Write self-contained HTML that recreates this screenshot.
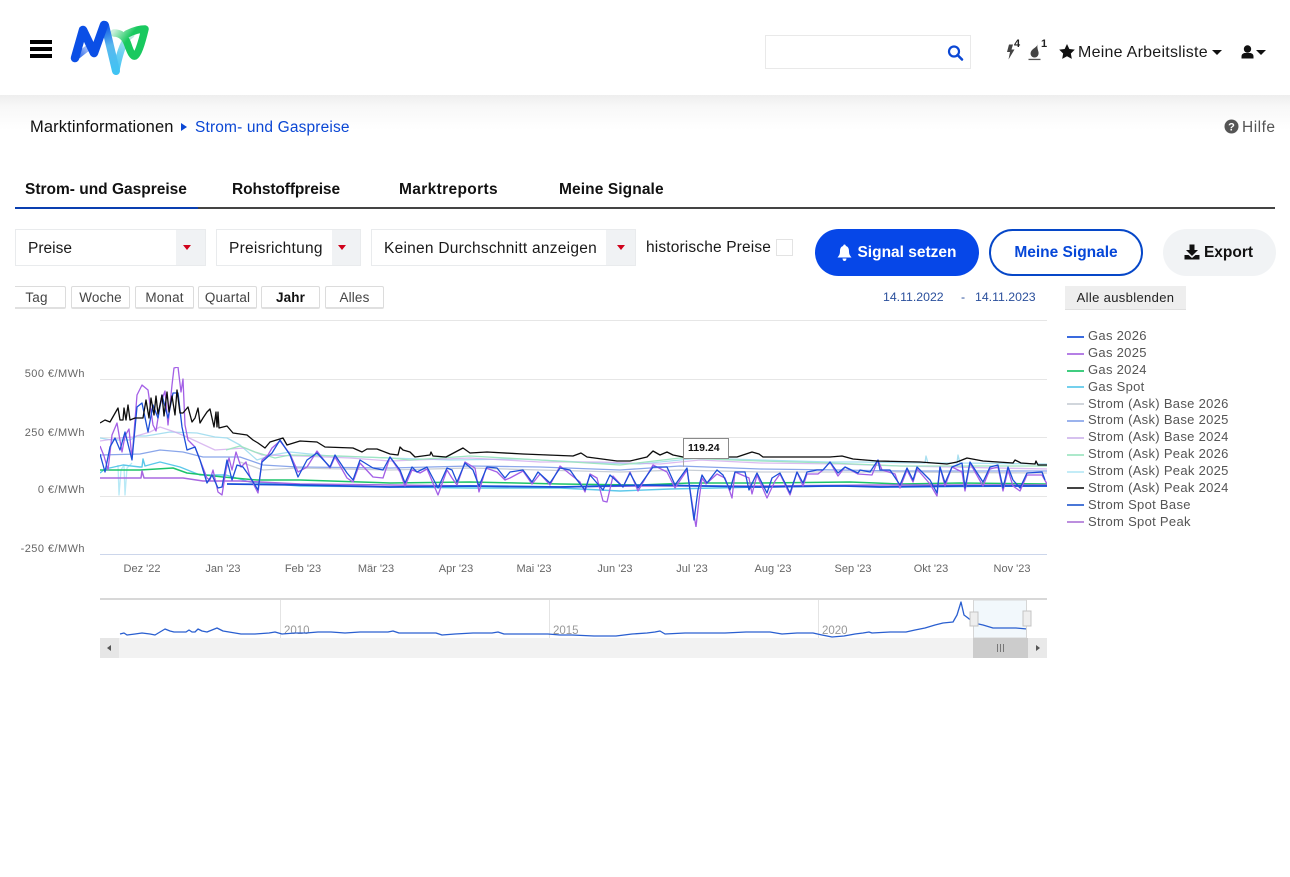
<!DOCTYPE html>
<html lang="de"><head><meta charset="utf-8"><title>Strom- und Gaspreise</title>
<style>
html,body{margin:0;padding:0;background:#fff}
body{width:1290px;height:877px;position:relative;overflow:hidden;font-family:"Liberation Sans",sans-serif;color:#111}
.a{position:absolute;white-space:nowrap}
.sel{position:absolute;top:229px;height:35px;border:1px solid #e9ebed;background:#fff;box-sizing:content-box}
.sel span{position:absolute;left:12px;top:10px;font-size:15.5px;color:#1a1a1a;white-space:nowrap;letter-spacing:.25px}
.sel i{position:absolute;right:0;top:0;bottom:0;width:29px;background:#f0f2f4}
.sel i:after{content:"";position:absolute;left:11px;top:15px;border:4px solid transparent;border-top:5px solid #d0021b;border-bottom:0}
.s1 i:after{left:7px}
.s2 i:after{left:6px}
.rb{position:absolute;top:286px;height:20px;border:1px solid #dcdcdc;border-bottom:2px solid #e0e0e0;border-radius:2px;background:#fff;text-align:center;font-size:13.5px;line-height:21px;color:#444;box-sizing:content-box;letter-spacing:.15px}
.tab{position:absolute;top:181px;font-size:15.5px;font-weight:bold;color:#111;white-space:nowrap}
.btn{position:absolute;top:229px;height:47px;border-radius:24px;box-sizing:border-box;font-weight:bold;font-size:15.5px;line-height:47px;text-align:center;white-space:nowrap}
.leg{position:absolute;left:1088px;font-size:13px;color:#555;white-space:nowrap;line-height:16px;letter-spacing:.3px}
.ln{position:absolute;left:1067px;width:17px;height:2px;margin-top:-.5px;opacity:.85}
.yl{position:absolute;left:0;width:85px;text-align:right;font-size:11px;color:#666;letter-spacing:.45px}
.xl{position:absolute;top:563px;width:60px;text-align:center;font-size:11px;color:#666}
</style></head><body>

<!-- header -->
<div class="a" style="left:0;top:95px;width:1290px;height:35px;background:linear-gradient(#eeeeee,#f8f8f8 35%,#fff)"></div>
<div class="a" style="left:30px;top:40px;width:22px;height:4px;background:#000"></div>
<div class="a" style="left:30px;top:47px;width:22px;height:4px;background:#000"></div>
<div class="a" style="left:30px;top:54px;width:22px;height:4px;background:#000"></div>

<svg class="a" style="left:60px;top:10px" width="100" height="70" viewBox="60 10 100 70">
<defs>
<linearGradient id="g1" gradientUnits="userSpaceOnUse" x1="104" y1="24" x2="116" y2="72"><stop offset="0" stop-color="#0b4fe6"/><stop offset=".45" stop-color="#5ab8ee"/><stop offset="1" stop-color="#3fc3f3"/></linearGradient>
<linearGradient id="g2" gradientUnits="userSpaceOnUse" x1="75" y1="58" x2="90" y2="46"><stop offset="0" stop-color="#0b4fe6"/><stop offset="1" stop-color="#c5d6fa"/></linearGradient>
<linearGradient id="g3" gradientUnits="userSpaceOnUse" x1="132" y1="36" x2="116" y2="72"><stop offset="0" stop-color="#bdeedd"/><stop offset=".5" stop-color="#6fd0f2"/><stop offset="1" stop-color="#3fc3f3"/></linearGradient>
<linearGradient id="g4" gradientUnits="userSpaceOnUse" x1="113" y1="32" x2="126" y2="42"><stop offset="0" stop-color="#c9f0da"/><stop offset="1" stop-color="#19c95f"/></linearGradient>
</defs>
<path d="M75 58 L89 47" fill="none" stroke="url(#g2)" stroke-width="6" stroke-linecap="round"/>
<path d="M131 35 Q122 40 116 71" fill="none" stroke="url(#g3)" stroke-width="7" stroke-linecap="round"/>
<path d="M114 33 Q124 33 128 45 Q132 57 135 56 Q139 54 145 29 Q137 29 127 34" fill="none" stroke="url(#g4)" stroke-width="7.500" stroke-linecap="round" stroke-linejoin="round"/>
<path d="M105 25 L116 71" fill="none" stroke="url(#g1)" stroke-width="8" stroke-linecap="round"/>
<path d="M75 58 L83 30 L94 53 L104 25" fill="none" stroke="#0b4fe6" stroke-width="8.500" stroke-linecap="round" stroke-linejoin="round"/>
</svg>

<!-- search -->
<div class="a" style="left:765px;top:35px;width:204px;height:32px;border:1px solid #e9e9e9"></div>
<svg class="a" style="left:946px;top:44px" width="18" height="18" viewBox="0 0 18 18"><circle cx="8" cy="7.500" r="5" fill="none" stroke="#0b47d4" stroke-width="2.200"/><path d="M11.500 11l4.500 4.500" stroke="#0b47d4" stroke-width="2.600" stroke-linecap="round"/></svg>

<!-- status icons -->
<svg class="a" style="left:1004px;top:42px" width="14" height="20" viewBox="0 0 14 20"><path d="M5 2.500H9L7.500 7.500H10.500L4.500 17.500L6 10H3z" fill="#444"/></svg>
<div class="a" style="left:1014px;top:38px;font-size:11px;font-weight:bold;color:#222">4</div>
<svg class="a" style="left:1027px;top:42px" width="15" height="20" viewBox="0 0 15 20"><path d="M10.500 2C10.500 5 6 6 4 9.500C2.700 12.500 4.500 15.500 7.500 15.500C10.500 15.500 12 13 11.500 10C11 8 10 6 10.500 2z" fill="#444"/><rect x="1.500" y="16.800" width="12" height="1.300" fill="#555"/></svg>
<div class="a" style="left:1041px;top:38px;font-size:11px;font-weight:bold;color:#222">1</div>
<svg class="a" style="left:1059px;top:44px" width="16" height="15" viewBox="0 0 24 23"><path d="M12 0l3.600 7.600 8.400 1.100-6.100 5.800 1.500 8.300L12 18.800l-7.400 4 1.500-8.300L0 8.700l8.400-1.100z" fill="#111"/></svg>
<div class="a" style="left:1078px;top:44px;font-size:16px;color:#1a1a1a;letter-spacing:.25px">Meine Arbeitsliste</div>
<div class="a" style="left:1212px;top:50px;border:5px solid transparent;border-top:5px solid #111;border-bottom:0"></div>
<svg class="a" style="left:1241px;top:45px" width="14" height="15" viewBox="0 0 14 15"><circle cx="6.500" cy="4" r="3.700" fill="#111"/><path d="M0.500 13.500V11.500C0.500 9 2.500 8 4 8H9C10.500 8 12.500 9 12.500 11.500V13.500z" fill="#111"/></svg>
<div class="a" style="left:1256px;top:50px;border:5px solid transparent;border-top:5px solid #111;border-bottom:0"></div>

<!-- breadcrumb -->
<div class="a" style="left:30px;top:118px;font-size:16.500px;color:#111;letter-spacing:.13px">Marktinformationen</div>
<div class="a" style="left:181px;top:123px;border:4px solid transparent;border-left:6px solid #0b47d4;border-right:0"></div>
<div class="a" style="left:195px;top:119px;font-size:15.500px;color:#0b47d4;letter-spacing:.15px">Strom- und Gaspreise</div>
<svg class="a" style="left:1224px;top:119px" width="15" height="15" viewBox="0 0 15 15"><circle cx="7.500" cy="7.500" r="7" fill="#555"/><text x="7.500" y="11.500" font-size="11" font-weight="bold" text-anchor="middle" fill="#fff" font-family="Liberation Sans, sans-serif">?</text></svg>
<div class="a" style="left:1242px;top:119px;font-size:15.500px;color:#555;letter-spacing:.5px">Hilfe</div>

<!-- tabs -->
<div class="tab" style="left:25px">Strom- und Gaspreise</div>
<div class="tab" style="left:232px;letter-spacing:-.1px">Rohstoffpreise</div>
<div class="tab" style="left:399px;letter-spacing:.35px">Marktreports</div>
<div class="tab" style="left:559px;letter-spacing:.1px">Meine Signale</div>
<div class="a" style="left:15px;top:207px;width:1260px;height:2px;background:#444"></div>
<div class="a" style="left:15px;top:207px;width:183px;height:2px;background:#0a3fb0"></div>

<!-- selects -->
<div class="sel s1" style="left:15px;width:189px"><span style="letter-spacing:0">Preise</span><i></i></div>
<div class="sel s2" style="left:216px;width:143px"><span>Preisrichtung</span><i style="width:28px"></i></div>
<div class="sel" style="left:371px;width:263px"><span>Keinen Durchschnitt anzeigen</span><i></i></div>
<div class="a" style="left:646px;top:239px;font-size:15.500px;color:#1a1a1a;letter-spacing:.15px">historische Preise</div>
<div class="a" style="left:776px;top:239px;width:15px;height:15px;border:1px solid #e3e3e3"></div>

<!-- buttons -->
<div class="btn" style="left:815px;width:164px;background:#0647e8;color:#fff;padding-left:20px">Signal setzen</div>
<svg class="a" style="left:836px;top:244px" width="17" height="18" viewBox="0 0 17 18"><path d="M8.500 0.500C9.500 0.500 9.800 1.200 9.800 2C12 2.600 13 4.500 13 7C13 10.500 14 11.500 15.500 13.500H1.500C3 11.500 4 10.500 4 7C4 4.500 5 2.600 7.200 2C7.200 1.200 7.500 0.500 8.500 0.500z M6.500 14.500H10.500C10.500 16 9.500 17 8.500 17C7.500 17 6.500 16 6.500 14.500z" fill="#fff"/></svg>
<div class="btn" style="left:989px;width:154px;background:#fff;border:2px solid #0647c8;color:#0647d8;line-height:43px">Meine Signale</div>
<div class="btn" style="left:1163px;width:113px;background:#f1f3f5;color:#111;padding-left:18px">Export</div>
<svg class="a" style="left:1184px;top:244px" width="16" height="16" viewBox="0 0 16 16"><path d="M5.500 0.500H10.500V6H14L8 12L2 6H5.500z" fill="#111"/><path d="M0.500 11H4.500L8 14L11.500 11H15.500V15.500H0.500z" fill="#111"/></svg>

<!-- range buttons -->
<div class="rb" style="left:15px;border-left:0;border-radius:0 2px 2px 0;padding-right:7px;box-sizing:border-box;width:51px;height:23px">Tag</div>
<div class="rb" style="left:71px;width:57px">Woche</div>
<div class="rb" style="left:135px;width:57px">Monat</div>
<div class="rb" style="left:198px;width:57px">Quartal</div>
<div class="rb" style="left:261px;width:57px;font-weight:bold;color:#111">Jahr</div>
<div class="rb" style="left:325px;width:57px">Alles</div>
<div class="a" style="left:883px;top:290px;font-size:12.300px;color:#2a4f9c">14.11.2022</div>
<div class="a" style="left:961px;top:290px;font-size:12.300px;color:#2a4f9c">-</div>
<div class="a" style="left:975px;top:290px;font-size:12.300px;color:#2a4f9c">14.11.2023</div>
<div class="a" style="left:1065px;top:286px;width:121px;height:24px;background:#eeeeee;border-bottom:1px solid #e0e0e0;box-sizing:border-box;text-align:center;font-size:13px;line-height:23px;color:#222;letter-spacing:.35px">Alle ausblenden</div>

<!-- chart -->
<svg class="a" style="left:0;top:0" width="1290" height="877" viewBox="0 0 1290 877" fill="none" stroke-linejoin="round">
<defs><filter id="sf" x="0" y="0" width="1" height="1" filterUnits="objectBoundingBox"><feGaussianBlur stdDeviation="0.35"/></filter></defs>
<g stroke="#e6e6e6" stroke-width="1">
<path d="M100 320.500H1047M100 379.500H1047M100 437.500H1047M100 496.500H1047"/>
</g>
<path d="M100 554.500H1047" stroke="#ccd6eb"/>
<g filter="url(#sf)">
<!-- light series -->
<polyline stroke="#b8e9f6" stroke-width="1.300" points="118,465 119,495 121,470 124,465 125,495 127,468 132,463"/>
<polyline stroke="#a8dff0" stroke-width="1.300" points="100,438 112,440 130,440 137,436 146,436 170,432 197,433 215,437 227,438 240,445 257,460 272,455 290,452 330,456 390,458 450,460 520,459 600,463 640,464 700,458 760,460 830,462 860,462 925,463 926,456 928,463 957,463 958,455 960,463 1047,464"/>
<polyline stroke="#cfa6ec" stroke-opacity=".75" stroke-width="1.300" points="100,441 120,438 133,437 150,432 160,427 175,432 187,437 215,450 245,448 262,455 300,456 350,458 390,461 470,458 540,462 600,462 660,464 700,460 760,463 840,464 900,466 1047,469"/>
<polyline stroke="#9fe5c2" stroke-width="1.300" points="226,450 240,446 255,452 275,458 290,455 340,456 390,458 410,460 470,456 540,460 620,465 680,458 760,461 830,463 900,466 1047,466"/>
<polyline stroke="#8aa6ea" stroke-width="1.300" points="100,455 140,454 160,450 183,452 203,457 240,457 263,465 297,467 390,468 470,466 540,467 620,470 680,466 760,469 840,470 900,471 1047,471"/>
<polyline stroke="#c9cfd6" stroke-width="1.300" points="240,462 263,470 297,468 390,470 470,468 540,470 620,472 680,470 760,472 840,472 900,472 1047,473"/>

<!-- gas -->
<polyline stroke="#5cc8ea" stroke-width="1.400" points="100,473 105,469 123,465 140,467 142,467 143,459 145,466 160,462 180,467 200,475 226,475 250,482 300,486 400,487 470,488 560,488 620,491 670,489 760,487 850,486 900,487 1047,486"/>
<polyline stroke="#1fc46a" stroke-width="1.500" points="100,470 140,470 173,468 187,473 223,477 257,480 300,480 390,483 470,482 560,484 640,485 690,483 760,483 850,482 900,484 960,483 1047,484"/>
<polyline stroke="#a868e0" stroke-width="1.500" points="100,478 140,478 141,478 142,471 144,478 183,478 203,481 240,481 300,484 390,485 470,486 560,487 640,486 760,486 880,485 1047,485"/>
<polyline stroke="#1750d8" stroke-width="1.800" points="227,484 300,485 390,487 470,486 560,487 650,485 760,487 826,486 845,486 880,487 960,486 1047,486"/>

<!-- spot peak -->
<polyline stroke="#a35fe6" stroke-width="1.300" points="100,446 104,456 108,470 112,435 117,423 122,452 125,436 129,429 132,458 137,395 142,385 148,390 153,425 156,431 160,405 165,391 168,425 172,385 174,368 178,367 181,392 183,379 185,425 188,440 195,447 200,460 207,478 210,480 213,470 218,492 222,495 226,470 229,458 232,470 236,452 241,467 246,462 250,477 258,493 262,460 268,455 272,448 280,441 290,454 298,472 307,467 317,451 330,468 335,457 347,478 353,482 360,463 373,477 383,478 390,457 400,472 405,486 412,470 420,473 427,469 438,495 447,470 452,478 457,485 465,462 475,468 479,492 486,468 497,472 505,480 510,478 523,471 532,484 540,474 550,485 560,466 570,474 580,482 585,492 590,474 597,478 603,501 607,502 613,476 623,487 630,472 638,491 653,465 667,472 675,488 687,470 694,515 696,527 699,500 702,478 706,484 717,474 725,478 730,492 732,498 735,472 749,478 752,494 757,475 767,498 775,481 780,474 790,495 797,472 803,486 807,474 818,474 823,470 830,462 838,476 845,467 858,474 872,475 878,460 882,470 895,474 900,488 907,470 913,482 917,469 930,484 937,496 940,467 945,486 952,467 962,472 965,491 970,463 983,486 990,469 998,467 1003,491 1008,470 1013,486 1020,491 1027,475 1042,475 1047,484"/>
<!-- spot base -->
<polyline stroke="#1b4fd8" stroke-width="1.300" points="100,454 105,472 110,447 115,438 120,450 125,432 132,460 137,407 142,403 148,432 153,405 158,418 162,395 168,418 173,393 178,393 182,427 187,450 195,447 200,460 207,483 212,475 218,488 222,487 227,460 232,480 237,465 243,467 250,477 258,490 262,462 272,453 280,440 290,455 298,477 307,460 317,453 330,467 335,455 347,473 353,480 360,460 373,468 383,470 390,457 400,470 405,483 412,467 417,472 427,467 438,488 447,468 452,470 457,482 465,463 473,470 479,486 487,467 497,468 505,478 510,472 523,470 532,482 538,472 550,483 560,468 570,470 577,480 585,490 590,475 603,490 610,475 623,487 630,473 638,488 653,467 667,467 675,485 687,468 694,520 698,490 702,475 707,483 717,470 723,475 730,490 735,472 745,472 749,490 757,473 767,493 772,478 780,473 790,493 797,472 803,483 807,472 817,470 823,470 830,462 838,473 845,467 858,473 860,470 870,472 878,460 880,470 890,470 900,485 907,468 913,480 917,467 930,480 937,493 940,467 945,483 952,467 962,463 965,488 970,462 983,482 990,467 998,465 1003,488 1008,467 1013,480 1020,488 1027,473 1042,472 1045,480"/>
<!-- black peak 2024 -->
<polyline stroke="#0c0c0c" stroke-width="1.300" points="100,423 105,420 110,422 118,408 120,420 123,420 124,408 126,420 128,405 130,420 135,418 143,418 146,400 149,418 151,398 154,415 156,396 158,414 160,405 162,395 164,416 167,392 169,412 172,396 175,415 177,390 180,413 183,413 188,407 192,422 195,418 198,408 200,423 203,418 207,412 210,409 214,427 216,412 217,427 218,412 219,428 227,426 233,433 247,435 253,440 258,443 265,448 270,442 283,438 287,445 300,441 317,442 325,447 353,448 362,452 367,449 377,449 390,454 398,455 400,447 403,450 410,452 415,457 430,455 431,452 433,456 446,457 463,448 470,453 487,452 523,454 573,456 581,453 587,457 617,461 630,461 647,457 653,451 660,455 667,452 673,455 683,457 720,457 737,457 752,452 759,454 763,457 797,457 830,457 842,456 853,459 877,461 920,462 947,464 957,462 967,458 983,461 1013,463 1015,460 1021,463 1035,464 1036,461 1038,465 1047,465"/>
</g>
</svg>

<!-- tooltip -->
<div class="a" style="left:683px;top:438px;width:44px;height:19px;background:#fff;border:1px solid #8a8a8a;font-size:10.500px;font-weight:bold;line-height:19px;text-align:left;text-indent:4px;color:#111">119.24</div>
<div class="a" style="left:683px;top:458px;width:1px;height:9px;background:#aaa"></div>

<!-- axis -->
<div class="yl" style="top:368px">500 €/MWh</div>
<div class="yl" style="top:427px">250 €/MWh</div>
<div class="yl" style="top:484px">0 €/MWh</div>
<div class="yl" style="top:543px">-250 €/MWh</div>
<div class="xl" style="left:112px">Dez '22</div>
<div class="xl" style="left:193px">Jan '23</div>
<div class="xl" style="left:273px">Feb '23</div>
<div class="xl" style="left:346px">Mär '23</div>
<div class="xl" style="left:426px">Apr '23</div>
<div class="xl" style="left:504px">Mai '23</div>
<div class="xl" style="left:585px">Jun '23</div>
<div class="xl" style="left:662px">Jul '23</div>
<div class="xl" style="left:743px">Aug '23</div>
<div class="xl" style="left:823px">Sep '23</div>
<div class="xl" style="left:901px">Okt '23</div>
<div class="xl" style="left:982px">Nov '23</div>

<!-- navigator -->
<div class="a" style="left:100px;top:598px;width:947px;height:2px;background:#d8d8d8"></div>
<div class="a" style="left:973px;top:600px;width:54px;height:38px;background:#f2f8fc"></div>
<div class="a" style="left:280px;top:600px;width:1px;height:38px;background:#e4e4e4"></div>
<div class="a" style="left:549px;top:600px;width:1px;height:38px;background:#e4e4e4"></div>
<div class="a" style="left:818px;top:600px;width:1px;height:38px;background:#e4e4e4"></div>
<div class="a" style="left:284px;top:625px;font-size:11.500px;color:#999">2010</div>
<div class="a" style="left:553px;top:625px;font-size:11.500px;color:#999">2015</div>
<div class="a" style="left:822px;top:625px;font-size:11.500px;color:#999">2020</div>
<svg class="a" style="left:0;top:0" width="1290" height="877" viewBox="0 0 1290 877" fill="none">
<polyline stroke="#2a5fd0" stroke-width="1.300" stroke-linejoin="round" points="120,634 124,633 127,635 135,634 142,633 150,634 155,635 160,632 165,629 170,631 174,632 180,632 186,632 189,630 192,632 195,632 198,629 202,631 207,632 212,630 217,628 223,631 229,632 235,633 241,634 255,634 269,633 275,632 282,634 295,633 306,633 318,632 331,632 345,633 360,632 381,632 388,632 393,631 399,633 415,633 436,633 442,635 455,634 473,633 485,633 492,633 498,632 504,634 525,634 548,634 560,635 572,635 594,636 616,636 632,634 647,633 655,632 660,631 665,634 685,633 708,633 725,633 746,632 758,632 770,632 782,634 797,633 813,633 822,635 832,637 844,636 855,634 863,633 869,632 872,633 890,632 906,632 915,630 925,628 935,625 943,623 953,622 957,615 961,602 964,615 968,618 974,623 983,625 993,628 1005,628 1016,628 1027,629"/>
<rect x="973.500" y="600" width="53" height="38" stroke="#d6d6d6" fill="none"/>
<rect x="970" y="612" width="8" height="14" fill="#eeeeee" stroke="#c4c4c4"/>
<rect x="1023" y="611" width="8" height="15" fill="#eeeeee" stroke="#c4c4c4"/>
</svg>
<div class="a" style="left:100px;top:638px;width:947px;height:20px;background:#f2f2f2"></div>
<div class="a" style="left:100px;top:638px;width:19px;height:20px;background:#e6e6e6"></div>
<div class="a" style="left:973px;top:638px;width:55px;height:20px;background:#cccccc"></div>
<div class="a" style="left:1028px;top:638px;width:19px;height:20px;background:#e9e9e9"></div>
<div class="a" style="left:107px;top:645px;border:3px solid transparent;border-right:4px solid #555;border-left:0"></div>
<div class="a" style="left:1036px;top:645px;border:3px solid transparent;border-left:4px solid #555;border-right:0"></div>
<div class="a" style="left:997px;top:644px;width:1px;height:8px;background:#777"></div>
<div class="a" style="left:1000px;top:644px;width:1px;height:8px;background:#777"></div>
<div class="a" style="left:1003px;top:644px;width:1px;height:8px;background:#777"></div>

<!-- legend -->
<div class="ln" style="top:336px;background:#1750d8"></div><div class="leg" style="top:328px">Gas 2026</div>
<div class="ln" style="top:353px;background:#a868e0"></div><div class="leg" style="top:345px">Gas 2025</div>
<div class="ln" style="top:370px;background:#1fc46a"></div><div class="leg" style="top:362px">Gas 2024</div>
<div class="ln" style="top:386px;background:#5cc8ea"></div><div class="leg" style="top:379px">Gas Spot</div>
<div class="ln" style="top:403px;background:#c9cfd6"></div><div class="leg" style="top:396px">Strom (Ask) Base 2026</div>
<div class="ln" style="top:420px;background:#8aa6ea"></div><div class="leg" style="top:412px">Strom (Ask) Base 2025</div>
<div class="ln" style="top:437px;background:#cfb6ec"></div><div class="leg" style="top:429px">Strom (Ask) Base 2024</div>
<div class="ln" style="top:454px;background:#9fe5c2"></div><div class="leg" style="top:446px">Strom (Ask) Peak 2026</div>
<div class="ln" style="top:471px;background:#b8e9f6"></div><div class="leg" style="top:463px">Strom (Ask) Peak 2025</div>
<div class="ln" style="top:487px;background:#222"></div><div class="leg" style="top:480px">Strom (Ask) Peak 2024</div>
<div class="ln" style="top:504px;background:#2a5fd0"></div><div class="leg" style="top:497px">Strom Spot Base</div>
<div class="ln" style="top:521px;background:#b07ad8"></div><div class="leg" style="top:514px">Strom Spot Peak</div>

</body></html>
